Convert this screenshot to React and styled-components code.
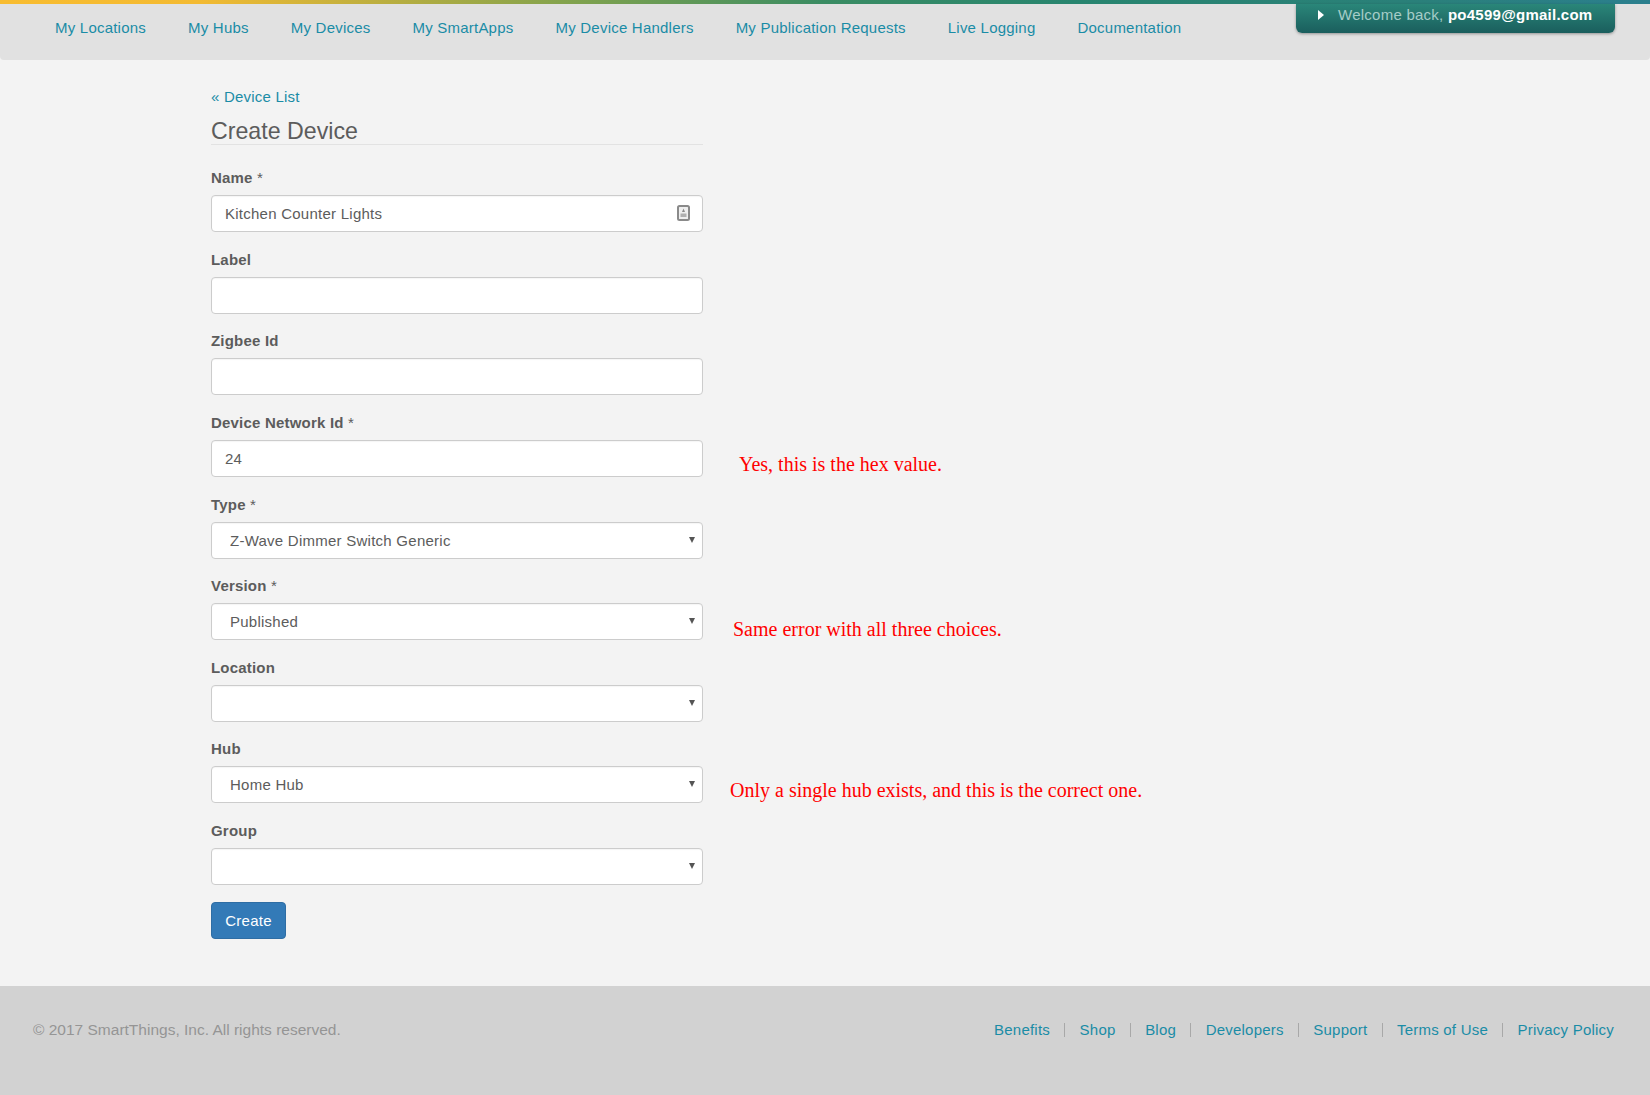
import React from "react";
import styled, { createGlobalStyle } from "styled-components";

const GlobalStyle = createGlobalStyle`
  html, body {
    margin: 0;
    padding: 0;
    background: #f3f3f3;
  }

  body {
    color: #5c5c5c;
    font-family: "Liberation Sans", Arial, sans-serif;
    font-size: 15px;
  }

  * {
    box-sizing: border-box;
  }
`;

const Page = styled.div`
  display: flex;
  flex-direction: column;
  min-height: 1095px;
`;

const TopStripe = styled.div`
  background: linear-gradient(90deg, #f8bc30 0%, #f3ba32 12%, #7fa24e 35%, #3a8c63 50%, #28856f 65%, #2a8079 85%, #2b7f8e 100%);
  height: 4px;
`;

const NavBar = styled.header`
  align-items: flex-start;
  background: #e1e1e1;
  border-radius: 0 0 4px 4px;
  display: flex;
  height: 56px;
  justify-content: space-between;
  padding: 0 35px 0 55px;
`;

const NavLinks = styled.nav`
  display: flex;
  gap: 42px;
  padding-top: 14px;
`;

const TealLink = styled.a`
  color: #1a8ca6;
  font-size: 15px;
  letter-spacing: 0.22px;
  line-height: 20px;
  text-decoration: none;
`;

const WelcomeTab = styled.div`
  align-items: center;
  background: linear-gradient(180deg, #2a8679 0%, #1a5e5d 100%);
  border-radius: 0 0 6px 6px;
  box-shadow: 0 1px 3px rgba(0, 0, 0, 0.35);
  color: #a5cdc8;
  display: flex;
  font-size: 15px;
  gap: 14px;
  height: 29px;
  letter-spacing: 0.25px;
  padding: 0 10px 8px 22px;
  width: 319px;
`;

const Caret = styled.span`
  border-bottom: 5px solid transparent;
  border-left: 6px solid #fff;
  border-top: 5px solid transparent;
  height: 0;
  width: 0;
`;

const Email = styled.strong`
  color: #fff;
  font-weight: 700;
`;

const Main = styled.main`
  flex: 1;
  padding: 27px 0 0 211px;
`;

const BackLink = styled(TealLink)`
  display: block;
`;

const Title = styled.h1`
  border-bottom: 1px solid #e2e2e2;
  color: #5c5c5c;
  font-size: 23.2px;
  font-weight: 400;
  line-height: 26px;
  margin: 11px 0 0;
  padding-bottom: 0;
  width: 492px;
`;

const Form = styled.form`
  display: flex;
  flex-direction: column;
  gap: 17.65px;
  padding-top: 23px;
`;

const FieldRow = styled.div`
  align-items: flex-end;
  display: flex;
`;

const Field = styled.div`
  display: flex;
  flex-direction: column;
  flex: none;
  gap: 7px;
  width: 492px;
`;

const Label = styled.label`
  color: #5c5c5c;
  font-size: 15px;
  font-weight: 700;
  letter-spacing: 0.2px;
  line-height: 20px;
`;

const Required = styled.span`
  font-weight: 400;
`;

const InputBox = styled.div`
  position: relative;
`;

const TextInput = styled.input`
  background: #fff;
  border: 1px solid #ccc;
  border-radius: 4px;
  box-shadow: inset 0 1px 1px rgba(0, 0, 0, 0.04);
  color: #5c5c5c;
  display: block;
  font-family: inherit;
  font-size: 15px;
  height: 37px;
  letter-spacing: 0.25px;
  outline: none;
  padding: 0 13px;
  width: 100%;
`;

const SelectInput = styled.select`
  appearance: none;
  background: #fff;
  border: 1px solid #ccc;
  border-radius: 4px;
  box-shadow: inset 0 1px 1px rgba(0, 0, 0, 0.04);
  color: #5c5c5c;
  display: block;
  font-family: inherit;
  font-size: 15px;
  height: 37px;
  letter-spacing: 0.25px;
  outline: none;
  padding: 0 18px;
  width: 100%;
`;

const SelectArrow = styled.span`
  border-left: 3.5px solid transparent;
  border-right: 3.5px solid transparent;
  border-top: 6px solid #555;
  height: 0;
  pointer-events: none;
  position: absolute;
  right: 8px;
  top: 15px;
  width: 0;
`;

const CardIcon = styled.svg`
  height: 16px;
  pointer-events: none;
  position: absolute;
  right: 13px;
  top: 10px;
  width: 13px;
`;

const Note = styled.span`
  color: #ff0000;
  flex: none;
  font-family: "Liberation Serif", "Times New Roman", serif;
  font-size: 20px;
  line-height: 24px;
  margin-bottom: ${({ $bottom }) => $bottom}px;
  margin-left: ${({ $left }) => $left}px;
`;

const SubmitButton = styled.button`
  background: #337ab7;
  border: 1px solid #2e6da4;
  border-radius: 4px;
  color: #fff;
  font-family: inherit;
  font-size: 15px;
  height: 37px;
  letter-spacing: 0.25px;
  margin-top: -1px;
  padding: 0;
  width: 75px;
`;

const SubmitRow = styled.div`
  display: flex;
`;

const Footer = styled.footer`
  align-items: flex-start;
  background: #d2d2d2;
  display: flex;
  height: 109px;
  justify-content: space-between;
  padding: 34px 36px 0 33px;
`;

const Copyright = styled.span`
  color: #959595;
  font-size: 15.5px;
  line-height: 20px;
`;

const FooterLinks = styled.nav`
  align-items: center;
  display: flex;
  gap: 14.3px;
`;

const Divider = styled.span`
  background: #a8a8a8;
  height: 14px;
  width: 1px;
`;

const navItems = [
  "My Locations",
  "My Hubs",
  "My Devices",
  "My SmartApps",
  "My Device Handlers",
  "My Publication Requests",
  "Live Logging",
  "Documentation",
];

const fields = [
  { name: "Name", required: true, value: "Kitchen Counter Lights", icon: true },
  { name: "Label" },
  { name: "Zigbee Id" },
  {
    name: "Device Network Id",
    required: true,
    value: "24",
    note: "Yes, this is the hex value.",
    left: 36,
    bottom: 1,
  },
  { name: "Type", required: true, value: "Z-Wave Dimmer Switch Generic", select: true },
  {
    name: "Version",
    required: true,
    value: "Published",
    select: true,
    note: "Same error with all three choices.",
    left: 30,
    bottom: -1,
  },
  { name: "Location", select: true },
  {
    name: "Hub",
    value: "Home Hub",
    select: true,
    note: "Only a single hub exists, and this is the correct one.",
    left: 27,
    bottom: 1,
  },
  { name: "Group", select: true },
];

const footerItems = ["Benefits", "Shop", "Blog", "Developers", "Support", "Terms of Use", "Privacy Policy"];

function FieldControl({ field }) {
  if (field.select) {
    return (
      <InputBox>
        <SelectInput defaultValue={field.value || ""}>
          <option value={field.value || ""}>{field.value || ""}</option>
        </SelectInput>
        <SelectArrow />
      </InputBox>
    );
  }

  return (
    <InputBox>
      <TextInput defaultValue={field.value || ""} />
      {field.icon && (
        <CardIcon viewBox="0 0 13 16" aria-hidden="true">
          <rect x="1" y="1" width="11" height="14" rx="1.5" fill="#efefef" stroke="#8a8a8a" strokeWidth="2" />
          <path d="M6.5 3.5 L8 7 H5 Z" fill="#8a8a8a" />
          <rect x="3.5" y="8.5" width="6" height="3.5" fill="#b0b0b0" />
        </CardIcon>
      )}
    </InputBox>
  );
}

export default function App() {
  return (
    <Page>
      <GlobalStyle />
      <TopStripe />
      <NavBar>
        <NavLinks>
          {navItems.map((item) => (
            <TealLink href="#" key={item}>
              {item}
            </TealLink>
          ))}
        </NavLinks>
        <WelcomeTab>
          <Caret />
          <span>
            Welcome back, <Email>po4599@gmail.com</Email>
          </span>
        </WelcomeTab>
      </NavBar>
      <Main>
        <BackLink href="#">« Device List</BackLink>
        <Title>Create Device</Title>
        <Form>
          {fields.map((field) => (
            <FieldRow key={field.name}>
              <Field>
                <Label>
                  {field.name}
                  {field.required && <Required> *</Required>}
                </Label>
                <FieldControl field={field} />
              </Field>
              {field.note && (
                <Note $left={field.left} $bottom={field.bottom}>
                  {field.note}
                </Note>
              )}
            </FieldRow>
          ))}
          <SubmitRow>
            <SubmitButton type="button">Create</SubmitButton>
          </SubmitRow>
        </Form>
      </Main>
      <Footer>
        <Copyright>© 2017 SmartThings, Inc. All rights reserved.</Copyright>
        <FooterLinks>
          {footerItems.map((item, index) => (
            <React.Fragment key={item}>
              {index > 0 && <Divider />}
              <TealLink href="#">{item}</TealLink>
            </React.Fragment>
          ))}
        </FooterLinks>
      </Footer>
    </Page>
  );
}
